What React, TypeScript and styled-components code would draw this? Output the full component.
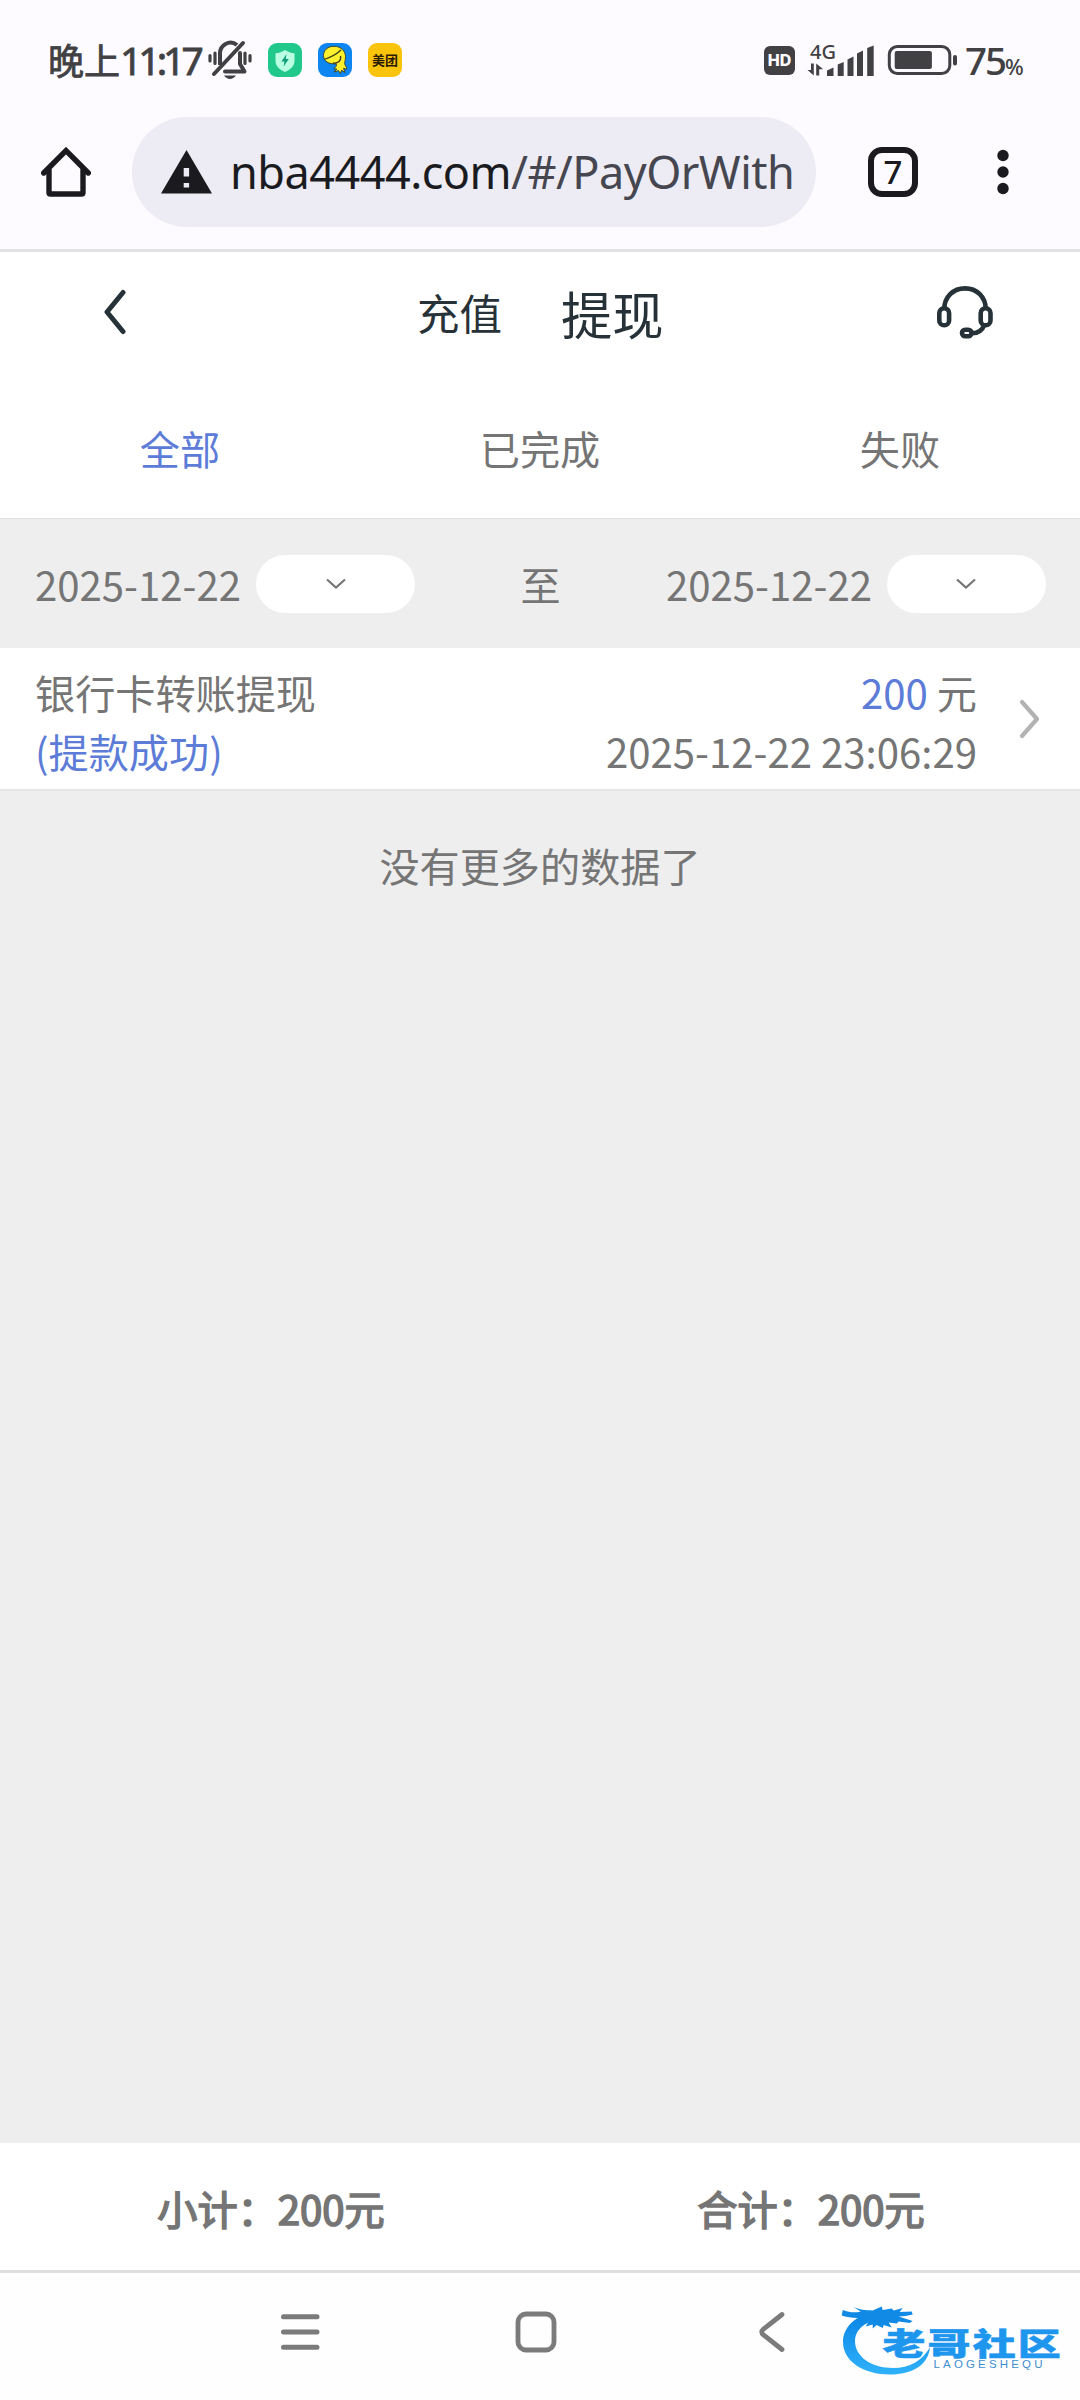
import React from "react";
import styled, { createGlobalStyle } from "styled-components";

const GlobalStyle = createGlobalStyle`
  * { box-sizing: border-box; }
  body {
    margin: 0;
    background: #eeeeee;
    font-family: "Noto Sans CJK SC", sans-serif;
  }
  svg { display: block; flex: none; }
`;

const Screen = styled.div`
  width: 1080px;
  height: 2400px;
  display: flex;
  flex-direction: column;
  background: #eeeeee;
  color: #757575;
  font-size: 40.15px;
  overflow: hidden;
`;

/* ---------- system status bar ---------- */
const StatusBar = styled.div`
  height: 117px;
  flex: none;
  display: flex;
  justify-content: space-between;
  padding: 40px 52px 0 48px;
  background: #fdfbff;
  color: #414143;
`;

const StatusGroup = styled.div`
  display: flex;
  align-items: center;
  height: 40px;
`;

const Clock = styled.span`
  display: flex;
  align-items: baseline;
  width: 160px;
  margin-top: -2px;
  font-size: 36px;
  font-weight: 400;
  line-height: 40px;
  white-space: nowrap;
  -webkit-text-stroke: 0.8px #414143;
`;

const ClockDigits = styled.span`
  font-family: "Noto Sans", sans-serif;
  font-size: 39px;
  letter-spacing: -4px;
`;

const AppBadge = styled.span<{ $color: string }>`
  width: 34px;
  height: 34px;
  margin-left: 16px;
  border-radius: 9px;
  background: ${(p) => p.$color};
  display: flex;
  align-items: center;
  justify-content: center;
  color: #2b1c00;
  font-size: 13px;
  font-weight: 700;
  line-height: 34px;
`;

const HdBadge = styled.span`
  width: 31px;
  height: 29px;
  margin-right: 11px;
  border-radius: 6px;
  background: #414143;
  color: #fdfbff;
  display: flex;
  align-items: center;
  justify-content: center;
  font: 800 16px/29px Inter, sans-serif;
`;

const BatteryText = styled.span`
  display: flex;
  align-items: baseline;
  width: 63px;
  margin-left: 7px;
  margin-top: 5px;
  font: 500 38.5px/40px "Noto Sans", sans-serif;
  letter-spacing: -2px;
  small {
    font-size: 22px;
    letter-spacing: 0;
  }
`;

/* ---------- browser toolbar ---------- */
const Toolbar = styled.div`
  height: 135px;
  flex: none;
  display: flex;
  align-items: flex-start;
  padding-left: 41px;
  background: #fdfbff;
  border-bottom: 3px solid #e1e0e3;
`;

const ToolIcon = styled.div<{ $w: number; $ml?: number; $drop?: number }>`
  width: ${(p) => p.$w}px;
  height: 110px;
  margin-left: ${(p) => p.$ml ?? 0}px;
  margin-top: ${(p) => p.$drop ?? 0}px;
  display: flex;
  align-items: center;
`;

const AddressBar = styled.div`
  width: 684px;
  height: 110px;
  margin-left: 41px;
  padding-left: 29px;
  border-radius: 55px;
  background: #edecf4;
  display: flex;
  align-items: center;
`;

const Url = styled.span`
  margin-left: 18px;
  font: 400 45px/60px "Noto Sans", sans-serif;
  letter-spacing: -0.5px;
  color: #45464f;
  white-space: nowrap;
  b {
    font-weight: 400;
    color: #1a1b20;
  }
`;

const TabCount = styled.div`
  width: 50px;
  height: 50px;
  margin-left: 52px;
  margin-top: 30px;
  border: 6px solid #1b1b1f;
  border-radius: 14px;
  color: #1b1b1f;
  text-align: center;
  font: 500 33px/38px "Noto Sans", sans-serif;
`;

/* ---------- page header ---------- */
const Header = styled.header`
  height: 128px;
  flex: none;
  display: flex;
  background: #fff;
  color: #263238;
`;

const HeaderSide = styled.div<{ $w: number; $pl: number; $top: number }>`
  width: ${(p) => p.$w}px;
  padding-left: ${(p) => p.$pl}px;
  padding-top: ${(p) => p.$top}px;
`;

const HeaderTab = styled.span<{ $size: number; $w: number; $top: number }>`
  width: ${(p) => p.$w}px;
  padding-top: ${(p) => p.$top}px;
  font-size: ${(p) => p.$size}px;
  line-height: 60px;
  white-space: nowrap;
`;

/* ---------- status tabs ---------- */
const Tabs = styled.nav`
  height: 139px;
  flex: none;
  display: flex;
  background: #fff;
  border-bottom: 1px solid #e0e0e0;
`;

const Tab = styled.span<{ $active?: boolean }>`
  flex: 1;
  text-align: center;
  line-height: 60px;
  padding-top: 38px;
  color: ${(p) => (p.$active ? "#5c7cd8" : "#757575")};
`;

/* ---------- date filter ---------- */
const Filter = styled.section`
  height: 129px;
  flex: none;
  display: flex;
  align-items: center;
  justify-content: space-between;
  padding: 0 34px 0 35px;
`;

const DateField = styled.div`
  display: flex;
  align-items: center;
  line-height: 58px;
`;

const DateSelect = styled.div`
  width: 159px;
  height: 58px;
  margin-left: 15px;
  border-radius: 29px;
  background: #fff;
  display: flex;
  align-items: center;
  justify-content: center;
`;

/* ---------- records ---------- */
const Record = styled.article`
  height: 143px;
  flex: none;
  display: flex;
  padding: 14px 40px 0 35px;
  background: #fff;
  line-height: 59px;
  border-bottom: 2px solid #e6e6e6;
`;

const RecordSide = styled.div<{ $right?: boolean }>`
  flex: 1;
  text-align: ${(p) => (p.$right ? "right" : "left")};
  white-space: nowrap;
`;

const Accent = styled.span`
  color: #5c7cd8;
`;

const Empty = styled.div`
  flex: 1;
  padding-top: 44px;
  text-align: center;
  line-height: 60px;
`;

const Totals = styled.footer`
  height: 127px;
  flex: none;
  display: flex;
  background: #fff;
  -webkit-text-stroke: 1.6px #757575;
`;

const Total = styled.span`
  flex: 1;
  text-align: center;
  padding-top: 35px;
  padding-left: 2px;
  line-height: 60px;
`;

/* ---------- system navigation ---------- */
const NavBar = styled.div`
  height: 130px;
  flex: none;
  display: flex;
  background: #fefefe;
  border-top: 3px solid #e0e0e0;
  padding: 31px 0 0 280px;
`;

const NavItem = styled.div<{ $w: number }>`
  width: ${(p) => p.$w}px;
  padding-top: 7px;
`;

const MutedBell = () => (
  <svg width="44" height="40" viewBox="0 0 44 40" fill="none" stroke="#414143" strokeWidth="4">
    <path d="M12 25V14.500a10.500 11 0 0 1 17-9.500" />
    <path d="M35 3 6 34" strokeLinecap="round" />
    <path d="M32 13v11l4.500 7.500H17" strokeLinejoin="round" strokeLinecap="round" />
    <path d="M16 35.500h12c-3 4.500-9 4.500-12 0z" fill="#414143" stroke="none" />
    <path d="M2 15.500v5.500M7 13v10.500M37 13v10.500M42 15.500v5.500" strokeWidth="3.200" strokeLinecap="round" />
  </svg>
);

const ShieldGlyph = () => (
  <svg width="34" height="34" viewBox="0 0 34 34">
    <path d="M17 7c3 2 6 3 9.500 3.200V18c0 5-4 8.500-9.500 11-5.500-2.500-9.500-6-9.500-11v-7.800C11 10 14 9 17 7z" fill="#b9ffe4" />
    <path d="M18.500 11 13.500 18.500h3l-.8 5 5-7.500h-3z" fill="#0f9a78" />
  </svg>
);

const BirdGlyph = () => (
  <svg width="34" height="34" viewBox="0 0 34 34" stroke="#3a3a20" strokeWidth="0.900" strokeLinejoin="round">
    <path
      d="M16 3.300c6.500 0 11.500 4.500 11.500 10.500 0 4-1.500 6-.5 8 1 2 2 3 1.500 4.500l-3-1 1.500 4.200-3.500-2.200-1 3.500-2-3.200-4.500 1.400 2.800-3-3-.2c2-1.500 3-3 2.500-5C10.500 21.500 5.500 18 5.500 12.500 5.500 7 10 3.300 16 3.300z"
      fill="#fff02e"
    />
    <path d="M6 16.500c5-1.500 12-5 17-9.500M15 20c5 1 8.500-2.500 7.500-7" fill="none" strokeWidth="1.300" />
  </svg>
);

const Signal = () => (
  <svg width="69" height="44" viewBox="806 38 69 44" fill="#414143">
    <text x="810" y="58.500" fontFamily="Noto Sans" fontSize="20.500" fontWeight="500" textLength="26" lengthAdjust="spacingAndGlyphs">4G</text>
    <path d="M811 63.500h2.800v12l-6.300-5.500h3.500zM816.200 75.500v-12l7 5.800h-4v6.200z" />
    <path d="M827 70.500l6.500-3v8.500h-6.500zM837.700 64.500l6-2.500v14h-6zM847.500 59.500l6-3v19.500h-6zM857 53.500l6-3v25.500h-6zM867.200 48l6.500-2.500v30.500h-6.500z" />
  </svg>
);

const Battery = () => (
  <svg width="71" height="32" viewBox="887 44 71 32">
    <rect x="889.300" y="46.500" width="60.500" height="27" rx="8" fill="none" stroke="#414143" strokeWidth="3" />
    <rect x="894.700" y="51" width="37.200" height="18" rx="2" fill="#414143" />
    <rect x="953" y="55" width="4" height="10.500" rx="2" fill="#414143" />
  </svg>
);

const HomeIcon = () => (
  <svg width="50" height="52" viewBox="0 0 50 52" fill="none" stroke="#1b1b1f" strokeWidth="5.400" strokeLinecap="round" strokeLinejoin="round">
    <path d="M2.700 27 25 4.500 47.300 27" strokeLinejoin="miter" />
    <path d="M8 24v22.500q0 1.500 1.500 1.500h31q1.500 0 1.500-1.500V24" />
  </svg>
);

const WarningIcon = () => (
  <svg width="51" height="44" viewBox="0 0 51 44">
    <path d="M25.500 0 51 43.500H0z" fill="#1b1b1f" />
    <path d="M22.700 18h5.400v8.500h-5.400zM22.700 33h5.400v4.500h-5.400z" fill="#edecf4" />
  </svg>
);

const KebabIcon = () => (
  <svg width="12" height="46" viewBox="0 0 12 46" fill="#1b1b1f">
    <circle cx="6" cy="6.500" r="5.700" />
    <circle cx="6" cy="23" r="5.700" />
    <circle cx="6" cy="39.500" r="5.700" />
  </svg>
);

const BackIcon = () => (
  <svg width="24" height="46" viewBox="0 0 24 46" fill="none" stroke="#263238" strokeWidth="5" strokeLinecap="round" strokeLinejoin="round">
    <path d="M20 3.500 4 23l16 19.500" />
  </svg>
);

const HeadsetIcon = () => (
  <svg width="56" height="53" viewBox="0 0 56 53" fill="none" stroke="#263238" strokeWidth="4.600">
    <path d="M7.200 23C7.500 11 16 2.400 28 2.400S48.500 11 48.800 23" />
    <rect x="2.300" y="22.300" width="9.800" height="17" rx="4.900" />
    <rect x="43.700" y="22.300" width="9.800" height="17" rx="4.900" />
    <path d="M47.500 38.500C45.500 44 42 47.300 35 47.300" />
    <rect x="25" y="43.700" width="9.500" height="6.500" rx="3.200" />
  </svg>
);

const DownIcon = () => (
  <svg width="20" height="12" viewBox="0 0 20 12" fill="none" stroke="#757575" strokeWidth="2.200">
    <path d="M1 1.500 10 9.500 19 1.500" />
  </svg>
);

const NextIcon = () => (
  <svg width="21" height="40" viewBox="0 0 21 40" fill="none" stroke="#b3b3b3" strokeWidth="4.200" strokeLinecap="round" strokeLinejoin="round">
    <path d="M3 3 18 20 3 37" />
  </svg>
);

const CommunityLogo = () => (
  <svg width="226" height="76" viewBox="840 2303 226 76">
    <defs>
      <linearGradient id="sea" x1="0" y1="0" x2="0" y2="1">
        <stop offset="0" stopColor="#0b84e6" />
        <stop offset="1" stopColor="#2fb2fa" />
      </linearGradient>
    </defs>
    <path
      d="M870 2312c-16 4-27 15-27 29 0 19 20 32.500 47 32.500 22 0 38-9 40-27-8 13-20 20.500-37 20.500-21 0-38-11-38-27 0-9 6-16 17-20z"
      fill="url(#sea)"
    />
    <path
      d="M842.700 2309c7 2.500 12 3 18 1.500l-8-5c7 3.500 13 3.500 20 4l9-4 1 3.500 9-1.500 2 2 9-2.500-3 4 12-.5 1 3-7 1.500-7 .5 14 4.500-3 2-11-1.500-2 2-8-1 3 5-8-2.500-1 3-6-3-4 3.500v-4l-7 2 3-5-6 1 1-5c-8 1-16 0-22-2z"
      fill="#118ae6"
    />
    <text
      transform="translate(882.5 2353.500) scale(1.410 1)"
      fontFamily="Noto Sans CJK SC"
      fontWeight="900"
      fontSize="30.500"
      letterSpacing="1.500"
      fill="#1f96ee"
      stroke="#1f96ee"
      strokeWidth="0.500"
    >
      老哥社区
    </text>
    <text x="933.500" y="2367" fontFamily="Liberation Sans" fontSize="11.500" textLength="109" fill="#3f8ed0">
      LAOGESHEQU
    </text>
  </svg>
);

const dates = ["2025-12-22", "2025-12-22"];

const DatePicker = ({ value }: { value: string }) => (
  <DateField>
    {value}
    <DateSelect>
      <DownIcon />
    </DateSelect>
  </DateField>
);

export default function App() {
  return (
    <Screen>
      <GlobalStyle />
      <StatusBar>
        <StatusGroup>
          <Clock>
            晚上<ClockDigits>11:17</ClockDigits>
          </Clock>
          <MutedBell />
          <AppBadge $color="#21c88b">
            <ShieldGlyph />
          </AppBadge>
          <AppBadge $color="#0d86f2">
            <BirdGlyph />
          </AppBadge>
          <AppBadge $color="#fbc40c">美团</AppBadge>
        </StatusGroup>
        <StatusGroup>
          <HdBadge>HD</HdBadge>
          <Signal />
          <ToolIcon as="span" $w={71} $ml={12}>
            <Battery />
          </ToolIcon>
          <BatteryText>
            75<small>%</small>
          </BatteryText>
        </StatusGroup>
      </StatusBar>

      <Toolbar>
        <ToolIcon $w={50}>
          <HomeIcon />
        </ToolIcon>
        <AddressBar>
          <WarningIcon />
          <Url>
            <b>nba4444.com</b>/#/PayOrWith
          </Url>
        </AddressBar>
        <TabCount>7</TabCount>
        <ToolIcon $w={12} $ml={79}>
          <KebabIcon />
        </ToolIcon>
      </Toolbar>

      <Header>
        <HeaderSide $w={417} $pl={103} $top={37}>
          <BackIcon />
        </HeaderSide>
        <HeaderTab $size={42.5} $w={144} $top={30}>
          充值
        </HeaderTab>
        <HeaderTab $size={51.3} $w={376} $top={31}>
          提现
        </HeaderTab>
        <HeaderSide $w={143} $pl={0} $top={34}>
          <HeadsetIcon />
        </HeaderSide>
      </Header>

      <Tabs>
        <Tab $active>全部</Tab>
        <Tab>已完成</Tab>
        <Tab>失败</Tab>
      </Tabs>

      <Filter>
        <DatePicker value={dates[0]} />
        <span>至</span>
        <DatePicker value={dates[1]} />
      </Filter>

      <Record>
        <RecordSide>
          <div>银行卡转账提现</div>
          <Accent>(提款成功)</Accent>
        </RecordSide>
        <RecordSide $right>
          <div>
            <Accent>200</Accent> 元
          </div>
          <div>2025-12-22 23:06:29</div>
        </RecordSide>
        <ToolIcon $w={21} $ml={42} $drop={2}>
          <NextIcon />
        </ToolIcon>
      </Record>

      <Empty>没有更多的数据了</Empty>

      <Totals>
        <Total>小计：200元</Total>
        <Total>合计：200元</Total>
      </Totals>

      <NavBar>
        <NavItem $w={235}>
          <svg width="40" height="44" viewBox="0 0 40 44" stroke="#7b7b7b" strokeWidth="5" strokeLinecap="round">
            <path d="M3.500 5.700h33.500M3.500 21h33.500M3.500 36.300h33.500" />
          </svg>
        </NavItem>
        <NavItem $w={243}>
          <svg width="42" height="44" viewBox="0 0 42 44" fill="none" stroke="#7b7b7b" strokeWidth="4.800">
            <rect x="3" y="3" width="36" height="36" rx="8" />
          </svg>
        </NavItem>
        <NavItem $w={82}>
          <svg width="30" height="44" viewBox="0 0 30 44" fill="none" stroke="#7b7b7b" strokeWidth="4.800" strokeLinecap="round">
            <path d="M24 3.500 5.500 18q-3.500 3 0 6L24 38.500" />
          </svg>
        </NavItem>
        <CommunityLogo />
      </NavBar>
    </Screen>
  );
}
